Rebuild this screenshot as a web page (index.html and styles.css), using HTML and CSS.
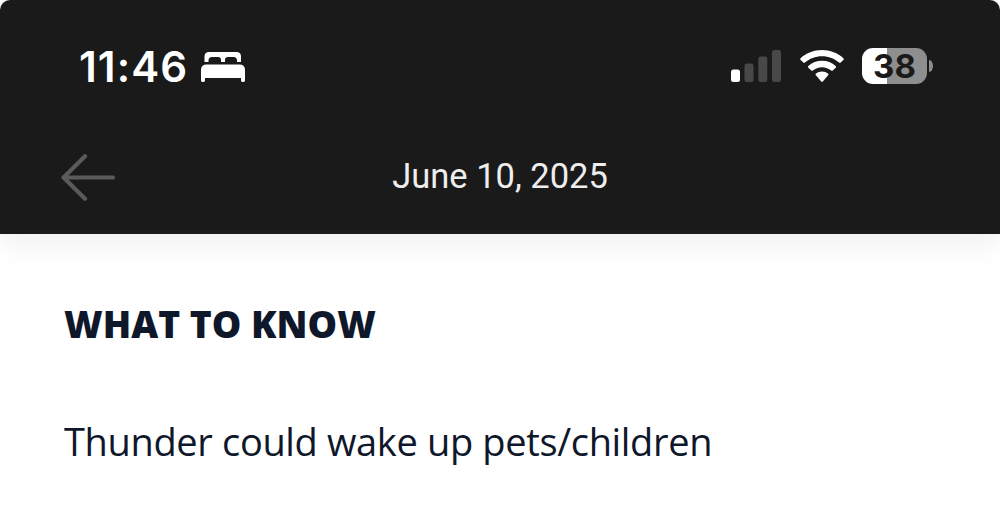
FILE: index.html
```html
<!DOCTYPE html>
<html lang="en">
<head>
  <meta charset="UTF-8">
  <meta name="viewport" content="width=device-width, initial-scale=1.0">
  <title>June 10, 2025</title>
  <link rel="stylesheet" href="styles.css">
</head>
<body>
  <header class="header">
    <div class="status-bar">
      <div class="status-left">
        <span class="clock">11:46</span>
        <svg class="bed" width="44" height="30" viewBox="0 0 44 30" fill="#fff">
          <path d="M3.5 10V4.5Q3.5 0 8 0H35.5Q40 0 40 4.5V10H36V8.5Q36 5 32.500 5H27Q24 5 24 8V10H20V8Q20 5 17 5H11Q7.500 5 7.500 8.500V10Z"/>
          <path d="M0 28.500V18Q0 12.500 5.500 12.500H38.500Q44 12.500 44 18V28.500Q44 30 42 30T40 28.500V26H4V28.500Q4 30 2 30T0 28.500Z"/>
        </svg>
      </div>
      <div class="status-right">
        <svg class="signal" width="51" height="32" viewBox="0 0 51 32">
          <rect x="1" y="19.500" width="9" height="12.500" rx="2.500" fill="#fff"/>
          <rect x="14.500" y="13.500" width="9" height="18.500" rx="2.500" fill="#484848"/>
          <rect x="28.300" y="6.500" width="9" height="25.500" rx="2.500" fill="#484848"/>
          <rect x="42" y="0" width="9" height="32" rx="2.500" fill="#484848"/>
        </svg>
        <svg class="wifi" width="44" height="32" viewBox="0 0 44 32" fill="#fff">
          <path d="M22 0C13.800 0 6.300 3 .6 8.200Q-.2 9 .6 9.900L3.300 12.600Q4.100 13.300 4.900 12.600C9.500 8.500 15.400 6.200 22 6.200S34.500 8.500 39.100 12.600Q39.900 13.300 40.700 12.600L43.400 9.900Q44.200 9 43.400 8.200C37.700 3 30.200 0 22 0Z"/>
          <path d="M22 10.800C16.800 10.800 12 12.700 8.300 16Q7.400 16.800 8.300 17.700L11.300 20.600Q12 21.300 12.800 20.600C15.300 18.500 18.500 17.200 22 17.200S28.700 18.500 31.200 20.600Q32 21.300 32.700 20.600L35.700 17.700Q36.600 16.800 35.700 16C32 12.700 27.200 10.800 22 10.800Z"/>
          <path d="M22 21.400C19.700 21.400 17.600 22.200 16 23.500Q15 24.300 15.900 25.200L21.200 31.400Q22 32.200 22.800 31.400L28.100 25.200Q29 24.300 28 23.500C26.400 22.200 24.300 21.400 22 21.400Z"/>
        </svg>
        <div class="battery">
          <span class="battery-level">38</span>
          <span class="battery-cap"></span>
        </div>
      </div>
    </div>
    <div class="nav-bar">
      <svg class="back" width="55" height="48" viewBox="0 0 55 48" fill="none" stroke="#5a5a5a" stroke-width="4.200" stroke-linecap="round" stroke-linejoin="round">
        <path d="M52 23.500H2.500M24 2.300L2.500 23.500L24 44.700"/>
      </svg>
      <h1 class="date">June 10, 2025</h1>
    </div>
  </header>
  <main class="content">
    <h2 class="title">WHAT TO KNOW</h2>
    <p class="note">Thunder could wake up pets/children</p>
  </main>
</body>
</html>
```
FILE: styles.css
```css
body {
  margin: 0;
  height: 522px;
  overflow: hidden;
  background-color: #fff;
  font-family: "Open Sans", sans-serif;
}

.header {
  height: 234px;
  background-color: #1a1a1a;
  border-radius: 10px 10px 0 0;
  box-shadow: 0 8px 32px rgba(0, 0, 0, 0.07);
}

.status-bar {
  display: flex;
  justify-content: space-between;
  height: 134px;
  padding: 0 67px 0 79px;
}

.status-left,
.status-right {
  display: flex;
  align-items: center;
}

.status-right {
  height: 132px;
}

.clock {
  width: 122px;
  color: #fff;
  font-family: Inter, sans-serif;
  font-size: 42px;
  font-weight: 600;
  letter-spacing: 1.1px;
  line-height: 50px;
}

.wifi {
  margin: 0 18px 0 19px;
}

.battery {
  display: flex;
  align-items: center;
  width: 71px;
}

.battery-level {
  width: 65px;
  height: 36px;
  border-radius: 11px;
  background: linear-gradient(to right, #fff 25px, #8e8e8e 25px);
  color: #1a1a1a;
  font-family: Inter, sans-serif;
  font-size: 33px;
  font-weight: 700;
  line-height: 37px;
  text-align: center;
}

.battery-cap {
  width: 4px;
  height: 12px;
  margin-left: 2px;
  border-radius: 0 4px 4px 0 / 0 6px 6px 0;
  background-color: #8e8e8e;
}

.nav-bar {
  display: grid;
  grid-template-columns: 55px 1fr 55px;
  align-items: center;
  height: 87px;
  padding: 0 61px;
}

.date {
  margin: 0 0 4px;
  color: #eee;
  font-family: Roboto, sans-serif;
  font-size: 34.5px;
  font-weight: 400;
  line-height: 40px;
  text-align: center;
}

.content {
  padding: 64px 64px 0;
  color: #0f172a;
}

.title {
  margin: 0;
  font-size: 37.2px;
  font-weight: 800;
  line-height: 52px;
}

.note {
  margin: 65px 0 0;
  font-size: 38px;
  letter-spacing: -0.35px;
  line-height: 52px;
}
```
